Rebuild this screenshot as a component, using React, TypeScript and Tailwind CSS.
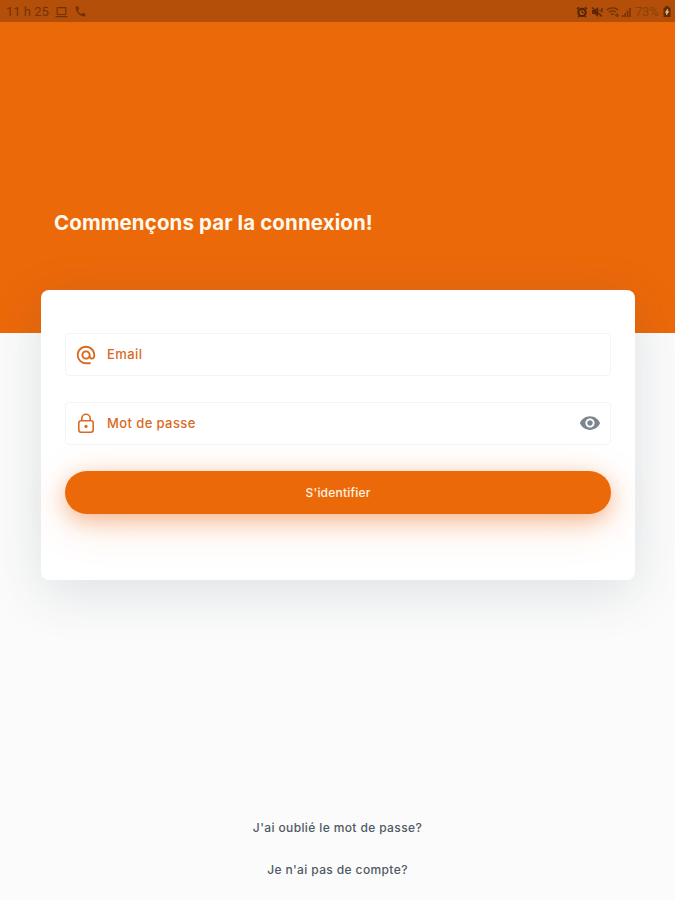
import React from 'react';
import { MdAlternateEmail, MdCall, MdRemoveRedEye } from 'react-icons/md';

interface FieldProps {
  icon: React.ReactNode;
  label: string;
  action?: React.ReactNode;
}

const LockIcon = () => (
  <svg viewBox="0 0 20 22" className="w-5 h-[22px]" fill="none" stroke="currentColor" strokeWidth="1.6">
    <rect x="2.8" y="7.8" width="14.4" height="11.4" rx="2.2" />
    <path d="M5.8 7.8V5.5a4.2 4.2 0 0 1 8.4 0v2.3" />
    <circle cx="10" cy="13.4" r="1.6" fill="currentColor" stroke="none" />
  </svg>
);

const LaptopIcon = () => (
  <svg viewBox="0 0 13 12" className="w-[13px] h-3" fill="none" stroke="currentColor" strokeWidth="1.2">
    <path d="M2.2 8.5V1.6h8.6v6.9zM.5 10.6h12" />
  </svg>
);

const AlarmIcon = () => (
  <svg viewBox="0 0 12 12" className="w-3 h-3" fill="none" stroke="currentColor">
    <circle cx="6" cy="6.4" r="3.7" strokeWidth="2" />
    <path d="M1 3l2-1.8M11 3L9 1.2M2.2 11.2l1-1.2M9.8 11.2l-1-1.2" strokeWidth="1.5" />
    <path d="M6 4.3v2.4h1.8" strokeWidth="1" />
  </svg>
);

const MuteIcon = () => (
  <svg viewBox="0 0 12 12" className="w-3 h-3">
    <path d="M1 4h2.5L7.2 1v10L3.5 8H1z" fill="currentColor" />
    <path d="M1 1.5l10 9M9 3.5v2M11 2v4.5M9 7.5v1" fill="none" stroke="currentColor" strokeWidth="1.2" />
  </svg>
);

const WifiIcon = () => (
  <svg viewBox="0 0 14 12" className="w-3.5 h-3" fill="none" stroke="currentColor" strokeWidth="1.4">
    <path d="M.7 4a9 9 0 0 1 11.6 0M2.7 6.3a6 6 0 0 1 7.4-.2M4.8 8.5a3 3 0 0 1 3.2-.2" />
    <path d="M9 10l2-2.2V11M11.5 7.8V11l2-2" strokeWidth="1" />
  </svg>
);

const SignalIcon = () => (
  <svg viewBox="0 0 9 10" className="w-[9px] h-2.5" fill="currentColor">
    <path d="M0 8h1.5v2H0zM2.4 6h1.5v4H2.4zM4.8 3.5h1.5V10H4.8zM7.2 1h1.5v9H7.2z" />
  </svg>
);

const BatteryIcon = () => (
  <svg viewBox="0 0 8 11" className="w-2 h-[11px]">
    <path d="M2.5 0h3v1.5H7.5V11H.5V1.5h2z" fill="#622d04" />
    <path d="M4.7 3L2.4 6.5h1.4L3.4 9l2.3-3.5H4.3z" fill="#f0c49c" stroke="#f0c49c" strokeWidth=".6" />
  </svg>
);

const StatusBar = () => (
  <div className="h-[22px] bg-[#b44f09] text-[#713306] flex items-center justify-between pl-1.5 pr-1 pt-px font-['Roboto',sans-serif] text-[13px] leading-none">
    <div className="flex items-center">
      <span className="w-[43px] whitespace-nowrap">11 h 25</span>
      <span className="ml-1.5"><LaptopIcon /></span>
      <MdCall className="w-[13px] h-[13px] ml-1.5" />
    </div>
    <div className="flex items-center">
      <span className="text-[#4f2303]"><AlarmIcon /></span>
      <span className="ml-[3px] text-[#5c2904]"><MuteIcon /></span>
      <span className="ml-[3px]"><WifiIcon /></span>
      <span className="ml-0.5"><SignalIcon /></span>
      <span className="ml-1 w-[25px] whitespace-nowrap tracking-[-0.2px] text-[#8b4108]">73%</span>
      <span className="ml-[3px]"><BatteryIcon /></span>
    </div>
  </div>
);

const Field = ({ icon, label, action }: FieldProps) => (
  <div className="h-[43px] border border-[#f3f4f4] rounded-[4px] flex items-center pl-[9px] pr-[9px] text-[#d96a20]">
    <div className="w-[22px] flex justify-center">{icon}</div>
    <span className="ml-[10px] text-[13px] font-medium tracking-[0.4px]">{label}</span>
    {action && <div className="ml-auto mb-0.5 text-[#7b8790]">{action}</div>}
  </div>
);

const App = () => (
  <div className="w-full h-[900px] overflow-hidden bg-[#fbfbfb] flex flex-col font-['Inter',sans-serif]">
    <header className="h-[333px] shrink-0 bg-[#ec690a]">
      <StatusBar />
      <h1 className="pl-[54px] pt-[187px] text-[20.5px] leading-7 tracking-[0.1px] font-bold text-[#fff8ec] whitespace-nowrap">
        Commençons par la connexion!
      </h1>
    </header>

    <main className="-mt-[43px] ml-[41px] w-[594px] h-[290px] shrink-0 rounded-[8px] bg-white px-6 pt-[43px] shadow-[0_12px_52px_rgba(45,65,80,0.14)]">
      <Field icon={<MdAlternateEmail className="w-[22px] h-[22px]" />} label="Email" />
      <div className="mt-[26px]">
        <Field
          icon={<LockIcon />}
          label="Mot de passe"
          action={<MdRemoveRedEye className="w-[22px] h-[22px]" />}
        />
      </div>
      <button className="block mt-[26px] w-full h-[43px] rounded-full bg-[#ec690a] text-[12px] tracking-[0.2px] font-medium text-[#fff3e3] shadow-[0_10px_44px_rgba(236,105,10,0.2),0_6px_20px_rgba(240,95,20,0.36)]">
        S'identifier
      </button>
    </main>

    <nav className="mt-auto pb-5 flex flex-col items-center gap-[22px] text-[12px] leading-5 tracking-[0.38px] font-medium text-[#505963]">
      <a>J'ai oublié le mot de passe?</a>
      <a>Je n'ai pas de compte?</a>
    </nav>
  </div>
);

export default App;
